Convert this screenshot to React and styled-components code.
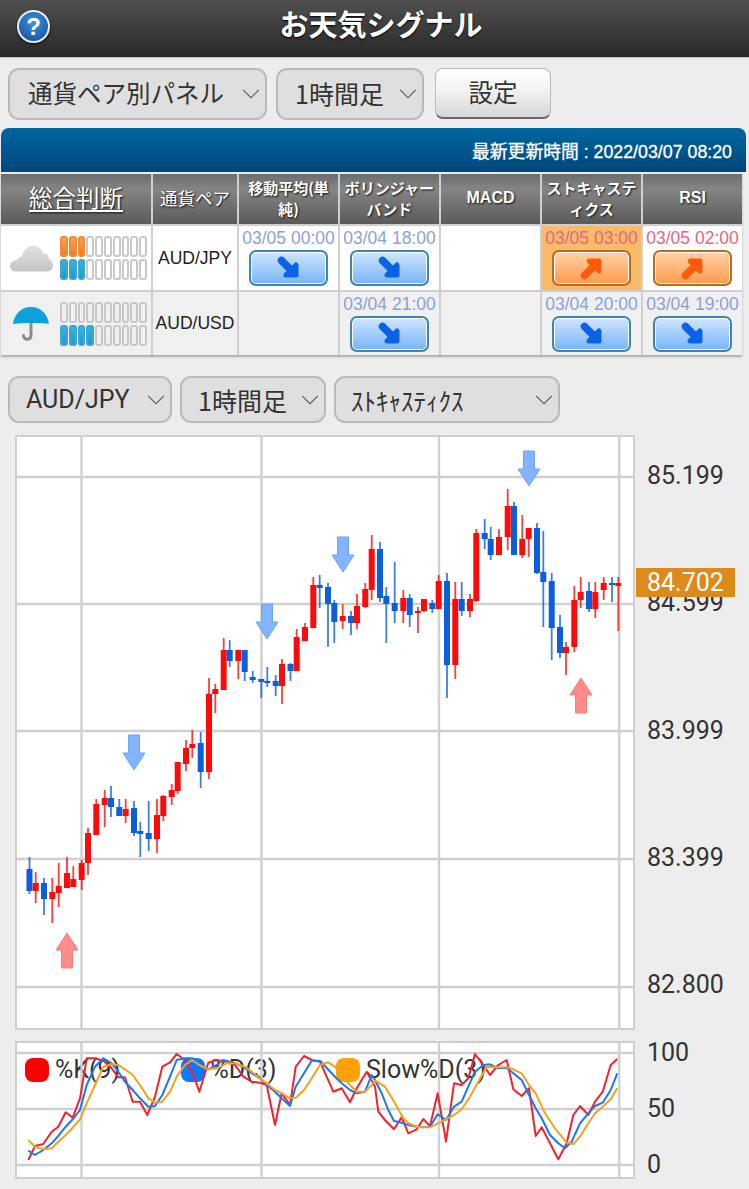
import React from 'react';
import styled, { createGlobalStyle } from 'styled-components';
import { ChevronDown } from 'lucide-react';

const JP = `"Noto Sans CJK JP", "Noto Sans", sans-serif`;
const LATIN = `"Liberation Sans", "Noto Sans CJK JP", sans-serif`;
const ROBOTO = `Roboto, "Noto Sans CJK JP", sans-serif`;

const GlobalStyle = createGlobalStyle`
  html, body {
    margin: 0;
    padding: 0;
    background: #ededed;
  }
  * { box-sizing: border-box; }
`;

const Page = styled.div`
  width: 749px;
  height: 1189px;
  overflow: hidden;
  background: #ededed;
  color: #333;
  font-family: ${JP};
`;

const TitleBar = styled.header`
  position: relative;
  height: 58px;
  display: flex;
  align-items: center;
  justify-content: center;
  background: linear-gradient(#505050, #282828);
  border-bottom: 1px solid #bbb;
`;

const Title = styled.h1`
  margin: 0 0 11px 13px;
  font-size: 29px;
  font-weight: 700;
  color: #fff;
  text-shadow: 0 1px 2px #000;
`;

const HelpIcon = styled.div`
  position: absolute;
  left: 17px;
  top: 10px;
  width: 33px;
  height: 33px;
  border-radius: 50%;
  border: 2px solid #e8eef5;
  background: radial-gradient(circle at 50% 35%, #3f8fd8, #0d4f9c);
  box-shadow: 0 1px 2px #000;
  color: #fff;
  font: 700 24px/29px ${LATIN};
  text-align: center;
`;

const Toolbar = styled.div`
  display: flex;
  gap: ${(p) => p.$gap || 9}px;
  padding: ${(p) => p.$pad};
`;

const Select = styled.div`
  width: ${(p) => p.$w}px;
  height: ${(p) => p.$h}px;
  display: flex;
  align-items: center;
  justify-content: space-between;
  padding: 0 0 ${(p) => p.$lift || 0}px ${(p) => p.$left}px;
  border: 2px solid #bababa;
  border-radius: 11px;
  background: #dfdfdf;
  font-family: ${(p) => (p.$latin ? ROBOTO : JP)};
  font-size: ${(p) => p.$size}px;
  color: #333;
  white-space: nowrap;
  svg { color: #666; flex: none; margin: ${(p) => p.$lift || 0}px -1px 0 0; }
`;

const SetButton = styled.div`
  width: 116px;
  height: 51px;
  margin-left: 2px;
  padding-bottom: 3px;
  display: flex;
  align-items: center;
  justify-content: center;
  border: 1px solid #bbb;
  border-bottom: 2px solid #666;
  border-radius: 8px;
  background: linear-gradient(#fff, #f4f4f4 40%, #d6d6d6);
  font-size: 24.5px;
  color: #333;
`;

const Panel = styled.section`
  width: 745px;
  margin-left: 1px;
`;

const PanelHead = styled.div`
  height: 44px;
  display: flex;
  align-items: center;
  justify-content: flex-end;
  padding-right: 14px;
  border-radius: 8px 8px 0 0;
  background: linear-gradient(#00679f, #00467c);
  color: #fff;
  font: 400 17.8px ${LATIN};
  -webkit-text-stroke: 0.3px #fff;
`;

const Table = styled.div`
  width: 741px;
  margin-top: 2px;
  display: grid;
  grid-template-columns: 150px 84px repeat(5, 99px);
  grid-template-rows: 50px 64px 63px;
  gap: 2px;
  background: #cfcfcf;
  box-shadow: 0 2px 2px #aaa;
`;

const HeadCell = styled.div`
  display: flex;
  align-items: center;
  justify-content: center;
  text-align: center;
  padding: 0 1px 3px;
  background: linear-gradient(#6c6c6c, #858585 30%, #5a5a5a);
  color: #fff;
  font-weight: ${(p) => (p.$plain ? 400 : 700)};
  font-size: ${(p) => p.$size || 15}px;
  line-height: 21px;
  text-decoration: ${(p) => (p.$under ? 'underline' : 'none')};
  text-underline-offset: 3px;
  text-shadow: 1px 1px 2px #111;
  font-family: ${(p) => (p.$latin ? LATIN : JP)};
`;

const Cell = styled.div`
  display: flex;
  flex-direction: column;
  align-items: center;
  background: ${(p) => p.$bg};
`;

const PairCell = styled(Cell)`
  justify-content: center;
  font: 17.5px ${LATIN};
  color: #222;
`;

const JudgeCell = styled(Cell)`
  flex-direction: row;
  align-items: center;
  padding-left: ${(p) => p.$iconLeft}px;
`;

const IconSlot = styled.div`
  width: ${(p) => 59 - p.$left}px;
  flex: none;
  display: flex;
`;

const Meters = styled.div`
  display: flex;
  flex-direction: column;
  gap: 2px;
`;

const Meter = styled.div`
  display: flex;
  gap: 1px;
`;

const Tick = styled.span`
  width: 7.8px;
  height: 21px;
  border-radius: 3px;
  border: 2px solid ${(p) => (p.$color === 'orange' ? '#f08a3c' : p.$color === 'blue' ? '#3ea5cf' : '#c8c8c8')};
  background: ${(p) =>
    p.$color === 'orange'
      ? 'linear-gradient(#ffa050, #f77a10)'
      : p.$color === 'blue'
        ? 'linear-gradient(#35b4e6, #1c9bd0)'
        : 'transparent'};
`;

const DateText = styled.div`
  margin-top: 2px;
  height: 22px;
  font: 17.5px/21px ${LATIN};
  white-space: nowrap;
  color: ${(p) => (p.$up ? '#e8667e' : '#8d9fd8')};
`;

const SignalButton = styled.div`
  width: 79px;
  height: 36px;
  display: flex;
  align-items: center;
  justify-content: center;
  border-radius: 7px;
  border: 2px solid ${(p) => (p.$up ? '#c06a20' : '#3f86ad')};
  box-shadow: inset 0 0 0 1px #fff;
  background: ${(p) => (p.$up ? 'linear-gradient(#ffd2a6, #ff9a4d)' : 'linear-gradient(#cfe6ff, #78b4f8)')};
`;

const ChartRow = styled.div`
  display: flex;
  padding-left: 15px;
  margin-top: ${(p) => p.$top}px;
`;

const PlotBox = styled.div`
  position: relative;
  width: 620px;
  height: ${(p) => p.$h}px;
  flex: none;
  border: 2px solid #cfcfcf;
  background: #fff;
  svg { position: relative; display: block; }
`;

const Axis = styled.div`
  position: relative;
  flex: 1;
  display: flex;
  flex-direction: column;
  gap: ${(p) => p.$gap}px;
  padding: ${(p) => p.$top}px 0 0 12px;
`;

const AxisLabel = styled.div`
  font: 25px/${(p) => p.$lh}px ${ROBOTO};
  color: #333;
`;

const PriceTag = styled.div`
  position: absolute;
  left: 1px;
  top: 133px;
  width: 99px;
  height: 29px;
  padding-left: 11px;
  background: #dc8a1c;
  color: #fff;
  font: 25px/29px ${ROBOTO};
`;

const Legend = styled.div`
  position: absolute;
  left: 8px;
  top: 15px;
  display: flex;
`;

const LegendItem = styled.div`
  width: 155.5px;
  display: flex;
  align-items: center;
  gap: 6px;
  font: 25px/24px ${ROBOTO};
  color: #333;
  white-space: nowrap;
`;

const Swatch = styled.span`
  width: 24px;
  height: 24px;
  border-radius: 8px;
  background: ${(p) => p.$color};
`;

// x, high, low, body top, body bottom, colour (page pixels)
const candles = [
  [29.5, 857, 894, 869, 891, 'b'], [35.7, 872, 903, 883, 891, 'r'], [44, 878, 915, 883, 899, 'b'],
  [52.3, 878, 923, 892, 899, 'r'], [58.7, 863, 907, 886, 893, 'r'], [67, 857, 888, 873, 888, 'r'],
  [73.3, 866, 887, 879, 887, 'r'], [81.7, 860, 890, 863, 880, 'r'], [88, 828, 875, 833, 863, 'r'],
  [96.3, 799, 835, 804, 835, 'r'], [104.7, 790, 827, 798, 805, 'r'], [111, 786, 817, 798, 807, 'b'],
  [119.3, 799, 816, 807, 816, 'b'], [125.7, 799, 823, 809, 816, 'r'], [134, 801, 836, 808, 833, 'b'],
  [140.3, 822, 857, 831, 834, 'b'], [148.7, 801, 851, 833, 839, 'b'], [157, 799, 853, 815, 839, 'r'],
  [163.3, 795, 821, 796, 816, 'r'], [171.7, 784, 805, 790, 797, 'r'], [177.7, 762, 794, 762, 791, 'r'],
  [186, 740, 771, 748, 764, 'r'], [192.3, 730, 758, 744, 748, 'r'], [200.7, 732, 788, 743, 772, 'b'],
  [209, 678, 779, 694, 772, 'r'], [215.3, 684, 713, 689, 694, 'r'], [223.7, 638, 690, 650, 690, 'r'],
  [229.7, 640, 667, 650, 661, 'b'], [238.3, 650, 679, 650, 661, 'r'], [244.7, 650, 681, 650, 672, 'b'],
  [252.7, 671, 683, 677, 680, 'b'], [261.3, 679, 698, 679, 682, 'b'], [267.3, 667, 687, 681, 682, 'b'],
  [275.7, 675, 696, 681, 686, 'b'], [282, 659, 704, 664, 686, 'r'], [290.5, 663, 681, 664, 671, 'b'],
  [296.7, 629, 671, 637, 671, 'r'], [305, 623, 641, 627, 641, 'r'], [313.3, 577, 628, 585, 628, 'r'],
  [319.7, 575, 608, 585, 588, 'b'], [328, 583, 647, 587, 604, 'b'], [334.3, 600, 643, 603, 622, 'b'],
  [342.7, 604, 629, 616, 621, 'r'], [351, 611, 635, 616, 623, 'b'], [357, 594, 629, 606, 623, 'r'],
  [365.3, 583, 608, 589, 607, 'r'], [371.7, 535, 600, 549, 590, 'r'], [380, 542, 602, 549, 598, 'b'],
  [386.3, 587, 643, 596, 604, 'b'], [394.7, 562, 623, 603, 611, 'b'], [403.3, 590, 623, 598, 611, 'r'],
  [409.7, 594, 627, 598, 615, 'b'], [418, 607, 633, 611, 613, 'r'], [424, 599, 612, 599, 611, 'r'],
  [432.3, 600, 613, 603, 609, 'b'], [438.7, 575, 609, 581, 609, 'r'], [447, 573, 698, 581, 665, 'b'],
  [455.3, 582, 679, 599, 665, 'r'], [461.7, 582, 616, 599, 611, 'b'], [470, 594, 617, 599, 611, 'r'],
  [476.3, 529, 602, 533, 601, 'r'], [484.7, 519, 549, 533, 539, 'b'], [490.7, 527, 560, 539, 555, 'b'],
  [499, 529, 555, 537, 555, 'r'], [507.7, 489, 550, 506, 537, 'r'], [514, 502, 555, 506, 555, 'b'],
  [522.3, 515, 558, 539, 555, 'r'], [528.7, 528, 557, 528, 539, 'r'], [537, 523, 574, 528, 573, 'b'],
  [543.3, 531, 627, 572, 582, 'b'], [551.7, 573, 660, 581, 628, 'b'], [560, 615, 658, 627, 653, 'b'],
  [566, 642, 675, 647, 653, 'r'], [574.3, 586, 652, 600, 647, 'r'], [580.7, 577, 608, 592, 600, 'r'],
  [589, 582, 612, 591, 609, 'b'], [595.3, 582, 618, 592, 609, 'r'], [603.7, 577, 600, 583, 590, 'r'],
  [612, 577, 602, 583, 584, 'b'], [618.3, 577, 631, 583, 586, 'r'],
];

const downArrows = [[134, 735, 770], [267, 604, 639], [343, 537, 572], [529, 451, 486]];
const upArrows = [[67, 968, 933], [581, 713, 678]];

const GRID_X = [81.5, 261.5, 439, 619.3];
const PRICE_Y = [477, 604, 731, 859, 987];
const OSC_Y = [1053, 1109, 1165];

// oscillator lines, traced at 3x: x, y-1030
const kLine = [85,390,105,348,130,342,155,305,175,290,197,247,218,263,240,205,260,85,285,85,310,92,335,115,355,142,375,142,398,215,420,215,442,255,465,200,487,110,510,97,530,72,555,90,578,130,598,185,625,98,650,90,680,95,705,105,730,140,755,155,780,158,800,165,825,285,845,190,870,225,887,110,912,78,935,90,960,95,1000,185,1025,175,1050,217,1070,175,1100,125,1125,170,1135,245,1155,270,1182,298,1205,262,1225,310,1250,298,1270,267,1290,288,1313,190,1338,335,1362,160,1385,165,1405,145,1425,72,1450,105,1470,135,1495,105,1520,90,1540,178,1565,198,1587,175,1607,318,1625,292,1675,388,1700,340,1720,255,1740,228,1765,255,1785,215,1808,185,1832,105,1852,87];
const dLine = [85,362,105,375,130,360,155,340,175,318,197,290,218,268,240,240,260,165,285,110,310,85,335,100,355,125,375,155,398,180,420,205,445,230,465,228,487,195,510,140,530,90,555,85,578,85,598,100,625,118,650,105,670,90,705,100,730,110,755,130,780,145,800,165,825,185,845,205,870,228,887,170,912,130,935,92,960,92,1000,135,1025,160,1050,180,1070,190,1095,185,1115,135,1125,150,1145,190,1165,240,1182,273,1205,278,1225,285,1250,290,1270,292,1290,290,1313,253,1338,270,1362,230,1385,215,1405,170,1425,125,1450,105,1470,103,1495,115,1520,113,1540,130,1565,150,1587,195,1607,235,1625,265,1650,315,1675,340,1695,355,1715,335,1740,280,1765,250,1785,228,1808,218,1832,180,1852,130];
const sLine = [85,330,105,350,130,358,155,355,175,335,197,315,218,293,240,268,260,220,285,165,310,110,335,103,355,105,375,118,398,135,420,165,445,205,465,218,487,215,510,185,530,140,555,105,575,90,598,105,625,118,650,115,680,100,705,100,735,110,755,125,780,145,800,160,825,180,845,190,870,205,887,203,912,180,935,145,960,105,985,97,1005,110,1030,140,1050,165,1070,185,1095,185,1115,165,1125,152,1155,170,1185,220,1210,265,1225,280,1250,290,1270,292,1290,292,1313,280,1338,268,1362,255,1385,238,1410,200,1435,155,1460,110,1495,112,1520,112,1540,118,1565,130,1587,165,1607,190,1635,250,1665,295,1700,338,1720,342,1740,320,1765,280,1785,250,1808,230,1832,208,1852,175];

const toPoints = (line) => {
  const out = [];
  for (let i = 0; i < line.length; i += 2) {
    out.push(`${(line[i] / 3).toFixed(1)},${(1030 + line[i + 1] / 3).toFixed(1)}`);
  }
  return out.join(' ');
};

const GridLines = ({ rows, top, bottom }) => (
  <g stroke="#d0d0d0" strokeWidth="2.4">
    {rows.map((y) => <line key={y} x1="15" x2="635" y1={y} y2={y} />)}
    {GRID_X.map((x) => <line key={x} x1={x} x2={x} y1={top} y2={bottom} />)}
  </g>
);

const CandleChart = () => (
  <svg width="616" height="591" viewBox="17 437 616 591">
    <GridLines rows={PRICE_Y} top={435} bottom={1030} />
    {candles.map(([x, hi, lo, top, bot, c], i) => {
      const fill = c === 'r' ? '#ff0a0a' : '#0b5fdc';
      return (
        <g key={i} fill={fill}>
          <rect x={x - 0.9} y={hi} width="1.8" height={lo - hi} opacity="0.8" />
          <rect x={x - 3} y={top} width="6" height={Math.max(bot - top, 2)} />
        </g>
      );
    })}
    {downArrows.map(([x, top, tip]) => (
      <path
        key={x}
        d={`M${x - 5.5} ${top}h11v${tip - top - 17}h5.5L${x} ${tip}L${x - 11} ${tip - 17}h5.5z`}
        fill="#82b4ff"
        stroke="#6aa4fb"
        strokeWidth="1"
      />
    ))}
    {upArrows.map(([x, bottom, tip]) => (
      <path
        key={x}
        d={`M${x - 5.5} ${bottom}h11v${tip - bottom + 17}h5.5L${x} ${tip}L${x - 11} ${tip + 17}h5.5z`}
        fill="#ff8c8c"
        stroke="#fa7a7a"
        strokeWidth="1"
      />
    ))}
  </svg>
);

const OscChart = () => (
  <svg width="616" height="134" viewBox="17 1043 616 134">
    <GridLines rows={OSC_Y} top={1041} bottom={1179} />
    <g fill="none" strokeWidth="2" strokeLinejoin="round">
      <polyline points={toPoints(kLine)} stroke="#f5222d" />
      <polyline points={toPoints(dLine)} stroke="#1a78f5" />
      <polyline points={toPoints(sLine)} stroke="#f5a01e" />
    </g>
  </svg>
);

const SignalArrow = ({ up }) => (
  <svg width="24" height="24" viewBox="0 0 24 24" style={up ? { transform: 'rotate(-90deg)' } : undefined}>
    <g fill={up ? '#ff5a0a' : '#0a62e6'} stroke={up ? '#ff5a0a' : '#0a62e6'} strokeLinejoin="round" strokeLinecap="round">
      <line x1="4.5" y1="4.5" x2="15" y2="15" strokeWidth="7.5" />
      <polygon points="19,9 19,19 9,19" strokeWidth="5" />
    </g>
  </svg>
);

const Cloud = () => (
  <svg width="43" height="27" viewBox="0 0 43 27">
    <defs>
      <linearGradient id="cloudFill" x1="0" x2="0" y1="0" y2="1">
        <stop offset="0" stopColor="#e2e2e2" />
        <stop offset="1" stopColor="#c4c4c4" />
      </linearGradient>
    </defs>
    <path
      d="M6 26.5C2 26.5 0 24 0 21c0-3.5 3-6 6.500-5.800C8 12.500 10 11.500 12 11.500 13.500 4.500 18 0.500 23 0.500c5 0 9 3.500 10 8.500 1.500-.5 3-.3 4 .5 1.500 1.200 2 3 1.800 4.500C41.500 14.800 43 17.500 43 20.500c0 3.500-2.500 6-6 6z"
      fill="url(#cloudFill)"
    />
  </svg>
);

const Umbrella = () => (
  <svg width="36" height="34" viewBox="0 0 36 34">
    <path d="M18 14v14.500c0 5-7.500 5-7.500 0" fill="none" stroke="#8b8b8b" strokeWidth="3" strokeLinecap="round" />
    <path d="M18 0c9 0 16.500 6 18 17-3-1.500-31-1.500-36 0C1.500 6 9 0 18 0z" fill="#0f9fdc" />
  </svg>
);

const Meterbar = ({ filled, color }) => (
  <Meter>
    {Array.from({ length: 10 }, (_, i) => (
      <Tick key={i} $color={i < filled ? color : undefined} />
    ))}
  </Meter>
);

const Signal = ({ date, up, bg }) => (
  <Cell $bg={bg}>
    <DateText $up={up}>{date}</DateText>
    <SignalButton $up={up}><SignalArrow up={up} /></SignalButton>
  </Cell>
);

const Chevron = () => <ChevronDown size={30} strokeWidth={0.85} />;

const columns = ['移動平均(単純)', 'ボリンジャーバンド', 'MACD', 'ストキャスティクス', 'RSI'];

const App = () => (
  <Page>
    <GlobalStyle />
    <TitleBar>
      <HelpIcon>?</HelpIcon>
      <Title>お天気シグナル</Title>
    </TitleBar>

    <Toolbar $pad="10px 8px 8px">
      <Select $w={259} $h={52} $size={24.5} $left={18} $lift={3}>
        通貨ペア別パネル<Chevron />
      </Select>
      <Select $w={148} $h={52} $size={25} $left={17} $lift={3}>
        1時間足<Chevron />
      </Select>
      <SetButton>設定</SetButton>
    </Toolbar>

    <Panel>
      <PanelHead>最新更新時間 : 2022/03/07 08:20</PanelHead>
      <Table>
        <HeadCell $size={23.5} $under $plain>総合判断</HeadCell>
        <HeadCell $size={17.5} $plain>通貨ペア</HeadCell>
        {columns.map((c) => (
          <HeadCell key={c} $latin={c === 'MACD' || c === 'RSI'} $size={c === 'MACD' || c === 'RSI' ? 16 : 15}>{c}</HeadCell>
        ))}

        <JudgeCell $bg="#fff" $iconLeft={9}>
          <IconSlot $left={9}><Cloud /></IconSlot>
          <Meters>
            <Meterbar filled={3} color="orange" />
            <Meterbar filled={3} color="blue" />
          </Meters>
        </JudgeCell>
        <PairCell $bg="#fff">AUD/JPY</PairCell>
        <Signal date="03/05 00:00" bg="#fff" />
        <Signal date="03/04 18:00" bg="#fff" />
        <Cell $bg="#fff" />
        <Signal date="03/05 03:00" up bg="#f8bb6c" />
        <Signal date="03/05 02:00" up bg="#fff" />

        <JudgeCell $bg="#f0f0f0" $iconLeft={12}>
          <IconSlot $left={12}><Umbrella /></IconSlot>
          <Meters>
            <Meterbar filled={0} color="orange" />
            <Meterbar filled={4} color="blue" />
          </Meters>
        </JudgeCell>
        <PairCell $bg="#f0f0f0">AUD/USD</PairCell>
        <Cell $bg="#f0f0f0" />
        <Signal date="03/04 21:00" bg="#f0f0f0" />
        <Cell $bg="#f0f0f0" />
        <Signal date="03/04 20:00" bg="#f0f0f0" />
        <Signal date="03/04 19:00" bg="#f0f0f0" />
      </Table>
    </Panel>

    <Toolbar $pad="21px 8px 0" $gap={8}>
      <Select $w={164} $h={47} $size={25} $left={16} $latin>
        AUD/JPY<Chevron />
      </Select>
      <Select $w={146} $h={47} $size={25} $left={16}>
        1時間足<Chevron />
      </Select>
      <Select $w={226} $h={47} $size={25} $left={15}>
        ｽﾄｷｬｽﾃｨｸｽ<Chevron />
      </Select>
    </Toolbar>

    <ChartRow $top={12}>
      <PlotBox $h={595}>
        <CandleChart />
      </PlotBox>
      <Axis $top={27} $gap={99.25}>
        {['85.199', '84.599', '83.999', '83.399', '82.800'].map((p) => (
          <AxisLabel key={p} $lh={28}>{p}</AxisLabel>
        ))}
        <PriceTag>84.702</PriceTag>
      </Axis>
    </ChartRow>

    <ChartRow $top={11}>
      <PlotBox $h={138}>
        <Legend>
          <LegendItem><Swatch $color="#ff0000" />%K(9)</LegendItem>
          <LegendItem><Swatch $color="#0a78ff" />%D(3)</LegendItem>
          <LegendItem><Swatch $color="#ffa200" />Slow%D(3)</LegendItem>
        </Legend>
        <OscChart />
      </PlotBox>
      <Axis $top={0} $gap={32}>
        {['100', '50', '0'].map((p) => (
          <AxisLabel key={p} $lh={24}>{p}</AxisLabel>
        ))}
      </Axis>
    </ChartRow>
  </Page>
);

export default App;
